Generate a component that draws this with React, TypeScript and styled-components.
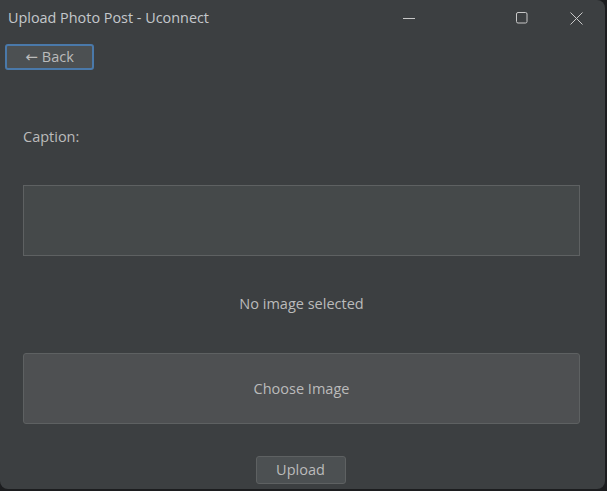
import React from "react";
import styled, { createGlobalStyle } from "styled-components";

const Global = createGlobalStyle`
  html, body { margin: 0; padding: 0; background: #1c1d1f; }
  body { font-family: "Open Sans", "Noto Sans", sans-serif; }
`;

const Window = styled.div`
  width: 605px;
  height: 489px;
  background: #3c3f41;
  border-radius: 0 8px 8px 8px;
  display: flex;
  flex-direction: column;
  overflow: hidden;
  color: #bbbbbb;
  font-size: 14.5px;
`;

const TitleBar = styled.div`
  height: 36px;
  display: flex;
  align-items: center;
  padding-left: 8px;
  flex-shrink: 0;
`;

const Title = styled.div`
  flex: 1;
  font-size: 14.4px;
  color: #c4c8cc;
  margin-top: -1px;
`;

const Controls = styled.div`
  display: flex;
  height: 100%;
  margin-right: 6px;
`;

const ControlButton = styled.div<{ $gap: number }>`
  width: 46px;
  height: 100%;
  margin-left: ${(p) => p.$gap}px;
  display: flex;
  align-items: center;
  justify-content: center;
`;

const Toolbar = styled.div`
  padding: 8px 5px 0;
  display: flex;
`;

const BackButton = styled.button`
  width: 89px;
  height: 26px;
  box-sizing: border-box;
  background: #4c5052;
  border: 2px solid #4a79aa;
  border-radius: 3px;
  color: #bbbbbb;
  font-family: inherit;
  font-size: 14.5px;
  display: flex;
  align-items: center;
  justify-content: center;
  gap: 4px;
  padding: 0 0 1px;
`;

const Arrow = styled.span`
  font-family: "DejaVu Sans", sans-serif;
  font-size: 15px;
`;

const Form = styled.div`
  display: flex;
  flex-direction: column;
  padding: 0 25px 0 23px;
`;

const Label = styled.div`
  margin-top: 57px;
  height: 20px;
  line-height: 20px;
`;

const TextArea = styled.div`
  margin-top: 38px;
  height: 71px;
  box-sizing: border-box;
  background: #45494a;
  border: 1px solid #5e6162;
`;

const Status = styled.div`
  margin-top: 38px;
  height: 20px;
  line-height: 20px;
  text-align: center;
`;

const ChooseButton = styled.div`
  margin-top: 39px;
  height: 71px;
  box-sizing: border-box;
  background: #4e5052;
  border: 1px solid #5e6162;
  border-radius: 3px;
  display: flex;
  align-items: center;
  justify-content: center;
`;

const UploadRow = styled.div`
  margin-top: 32px;
  display: flex;
  justify-content: center;
  padding-right: 2px;
`;

const UploadButton = styled.div`
  width: 90px;
  height: 28px;
  box-sizing: border-box;
  background: #4c5052;
  border: 1px solid #5e6162;
  border-radius: 3px;
  display: flex;
  align-items: center;
  justify-content: center;
  padding-bottom: 1px;
`;

export default function App() {
  return (
    <>
      <Global />
      <Window>
        <TitleBar>
          <Title>Upload Photo Post - Uconnect</Title>
          <Controls>
            <ControlButton $gap={0}>
              <svg width="12" height="12" viewBox="0 0 12 12">
                <line x1="0" y1="6.5" x2="12" y2="6.5" stroke="#c8c8c8" strokeWidth="1" />
              </svg>
            </ControlButton>
            <ControlButton $gap={67}>
              <svg width="12" height="12" viewBox="0 0 12 12">
                <rect x="0.5" y="0.5" width="10.5" height="10.5" rx="1.5" fill="none" stroke="#c8c8c8" strokeWidth="1" />
              </svg>
            </ControlButton>
            <ControlButton $gap={8}>
              <svg width="13" height="13" viewBox="0 0 13 13">
                <path d="M0.5 0.5 L12.5 12.5 M12.5 0.5 L0.5 12.5" stroke="#c8c8c8" strokeWidth="1" />
              </svg>
            </ControlButton>
          </Controls>
        </TitleBar>
        <Toolbar>
          <BackButton>
            <Arrow>←</Arrow>
            <span>Back</span>
          </BackButton>
        </Toolbar>
        <Form>
          <Label>Caption:</Label>
          <TextArea />
          <Status>No image selected</Status>
          <ChooseButton>Choose Image</ChooseButton>
          <UploadRow>
            <UploadButton>Upload</UploadButton>
          </UploadRow>
        </Form>
      </Window>
    </>
  );
}
